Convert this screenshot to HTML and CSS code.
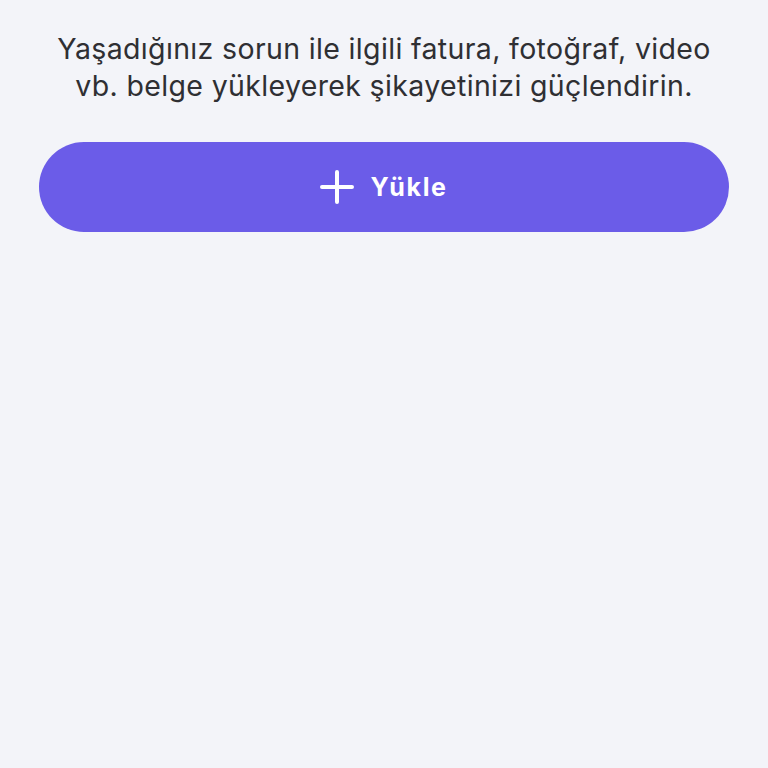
FILE: index.html
```html
<!DOCTYPE html>
<html>
  <head>
    <meta charset="UTF-8">
    <title>Belge Yükle</title>
    <link rel="stylesheet" href="styles.css">
  </head>
  <body>
    <div class="upload">
      <p class="upload-info">Yaşadığınız sorun ile ilgili fatura, fotoğraf, video vb. belge yükleyerek şikayetinizi güçlendirin.</p>
      <button class="upload-btn">
        <svg class="plus" width="34" height="34" viewBox="0 0 34 34">
          <path d="M17 2 V32 M2 17 H32" stroke="#fff" stroke-width="4" stroke-linecap="round"/>
        </svg>
        <span>Yükle</span>
      </button>
    </div>
  </body>
</html>
```

FILE: styles.css
```css
html, body {
  margin: 0;
  padding: 0;
  background: #f3f4f9;
  height: 100%;
}

.upload {
  padding: 30px 39px 0 39px;
  display: flex;
  flex-direction: column;
}

.upload-info {
  margin: 0 0 38px 0;
  text-align: center;
  font-family: Inter, sans-serif;
  font-size: 28.5px;
  letter-spacing: 0.35px;
  line-height: 37px;
  color: #2f2f33;
}

.upload-btn {
  height: 90px;
  border: none;
  border-radius: 45px;
  background: #6b5ce8;
  color: #fff;
  display: flex;
  align-items: center;
  justify-content: center;
  gap: 16px;
  font-family: Inter, sans-serif;
  font-weight: 700;
  font-size: 25px;
  letter-spacing: 1.6px;
  cursor: pointer;
}
```
